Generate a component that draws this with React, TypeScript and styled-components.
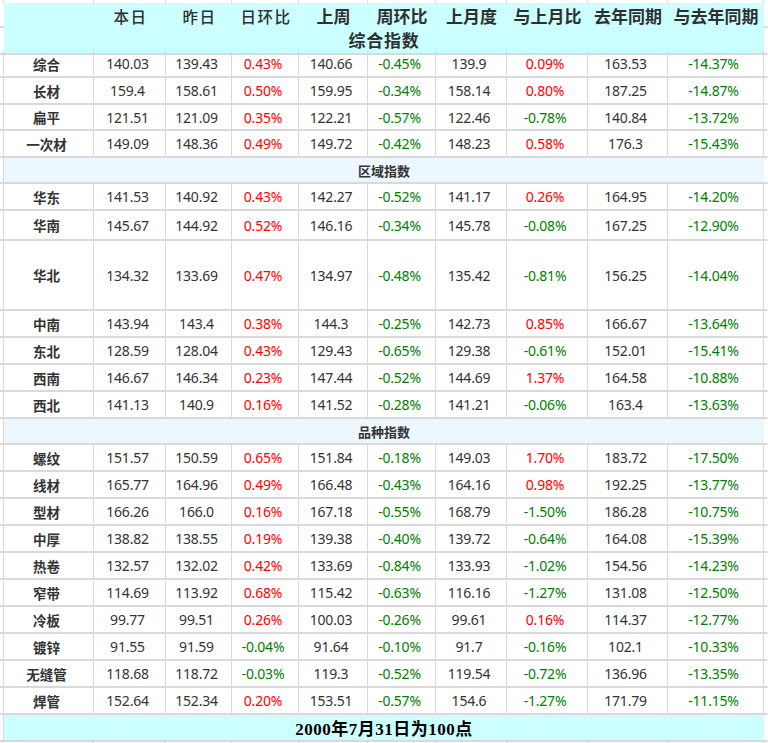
import React from "react";
import styled, { createGlobalStyle, css } from "styled-components";

const GlobalStyle = createGlobalStyle`
  html, body {
    margin: 0;
    padding: 0;
    background: #ffffff;
    overflow: hidden;
  }
  * { box-sizing: border-box; }
`;

const COLS = "4px 90px 72px 66px 67px 69px 68px 71px 81px 80px 96px 1fr";
const LINE = "#d9d9d9";
const CYAN = "#ccffff";
const BAND = "#ecf7ff";

const Sheet = styled.div`
  display: flex;
  flex-direction: column;
  width: 768px;
  height: 743px;
  overflow: hidden;
`;

const Row = styled.div<{ $h: number }>`
  display: grid;
  grid-template-columns: ${COLS};
  height: ${(p) => p.$h}px;
`;

const Stub = styled.div<{ $bottom?: boolean; $right?: boolean; $bg?: string }>`
  border-right: 1px solid ${(p) => (p.$right === false ? "transparent" : LINE)};
  border-bottom: ${(p) => (p.$bottom === false ? "0" : `2px solid ${LINE}`)};
  background: ${(p) => p.$bg ?? "transparent"};
`;

const HeadCell = styled.div<{ $light?: boolean }>`
  background: ${CYAN};
  display: flex;
  align-items: center;
  justify-content: center;
  font-family: "Noto Sans CJK SC", "Noto Sans", sans-serif;
  color: #2f2f2f;
  white-space: nowrap;
  ${(p) =>
    p.$light
      ? css`
          font-size: 15.5px;
          font-weight: 500;
          letter-spacing: 1.5px;
          padding-left: 1px;
        `
      : css`
          font-size: 17px;
          font-weight: 700;
        `}
`;

const HeadTitle = styled.div`
  grid-column: 2 / 12;
  background: ${CYAN};
  border-bottom: 2px solid ${LINE};
  display: flex;
  align-items: center;
  justify-content: center;
  font-family: "Noto Sans CJK SC", sans-serif;
  font-size: 17px;
  font-weight: 700;
  letter-spacing: 0.8px;
  color: #2f2f2f;
  padding-bottom: 1px;
`;

const Cell = styled.div<{ $tone?: "up" | "down" | "plain" }>`
  border-right: 1px solid ${LINE};
  border-bottom: 2px solid ${LINE};
  display: flex;
  align-items: center;
  justify-content: center;
  padding-right: 4px;
  font-family: "Noto Sans", "Noto Sans CJK SC", sans-serif;
  font-size: 14px;
  letter-spacing: -0.2px;
  white-space: nowrap;
  color: ${(p) =>
    p.$tone === "up" ? "#ff0000" : p.$tone === "down" ? "#008000" : "#333333"};
`;

const LabelCell = styled(Cell)`
  font-family: "Noto Sans CJK SC", sans-serif;
  font-size: 13.5px;
  font-weight: 700;
  letter-spacing: 0;
  color: #333333;
`;

const BandCell = styled.div<{ $bg: string; $footer?: boolean }>`
  grid-column: 2 / 12;
  background: ${(p) => p.$bg};
  border-bottom: 2px solid ${LINE};
  display: flex;
  align-items: center;
  justify-content: center;
  white-space: nowrap;
  color: ${(p) => (p.$footer ? "#000000" : "#333333")};
  font-weight: 700;
  ${(p) =>
    p.$footer
      ? css`
          font-family: "Liberation Serif", "Noto Sans CJK SC", serif;
          font-size: 17px;
          letter-spacing: 0.5px;
        `
      : css`
          font-family: "Noto Sans CJK SC", sans-serif;
          font-size: 13px;
        `}
`;

type DataRow = { name: string; h: number; v: string[] };

const heads = ["本日", "昨日", "日环比", "上周", "周环比", "上月度", "与上月比", "去年同期", "与去年同期"];

const group1: DataRow[] = [
  { name: "综合", h: 27, v: ["140.03", "139.43", "0.43%", "140.66", "-0.45%", "139.9", "0.09%", "163.53", "-14.37%"] },
  { name: "长材", h: 27, v: ["159.4", "158.61", "0.50%", "159.95", "-0.34%", "158.14", "0.80%", "187.25", "-14.87%"] },
  { name: "扁平", h: 26, v: ["121.51", "121.09", "0.35%", "122.21", "-0.57%", "122.46", "-0.78%", "140.84", "-13.72%"] },
  { name: "一次材", h: 27, v: ["149.09", "148.36", "0.49%", "149.72", "-0.42%", "148.23", "0.58%", "176.3", "-15.43%"] },
];

const group2: DataRow[] = [
  { name: "华东", h: 27, v: ["141.53", "140.92", "0.43%", "142.27", "-0.52%", "141.17", "0.26%", "164.95", "-14.20%"] },
  { name: "华南", h: 30, v: ["145.67", "144.92", "0.52%", "146.16", "-0.34%", "145.78", "-0.08%", "167.25", "-12.90%"] },
  { name: "华北", h: 70, v: ["134.32", "133.69", "0.47%", "134.97", "-0.48%", "135.42", "-0.81%", "156.25", "-14.04%"] },
  { name: "中南", h: 27, v: ["143.94", "143.4", "0.38%", "144.3", "-0.25%", "142.73", "0.85%", "166.67", "-13.64%"] },
  { name: "东北", h: 27, v: ["128.59", "128.04", "0.43%", "129.43", "-0.65%", "129.38", "-0.61%", "152.01", "-15.41%"] },
  { name: "西南", h: 27, v: ["146.67", "146.34", "0.23%", "147.44", "-0.52%", "144.69", "1.37%", "164.58", "-10.88%"] },
  { name: "西北", h: 27, v: ["141.13", "140.9", "0.16%", "141.52", "-0.28%", "141.21", "-0.06%", "163.4", "-13.63%"] },
];

const group3: DataRow[] = [
  { name: "螺纹", h: 27, v: ["151.57", "150.59", "0.65%", "151.84", "-0.18%", "149.03", "1.70%", "183.72", "-17.50%"] },
  { name: "线材", h: 27, v: ["165.77", "164.96", "0.49%", "166.48", "-0.43%", "164.16", "0.98%", "192.25", "-13.77%"] },
  { name: "型材", h: 27, v: ["166.26", "166.0", "0.16%", "167.18", "-0.55%", "168.79", "-1.50%", "186.28", "-10.75%"] },
  { name: "中厚", h: 27, v: ["138.82", "138.55", "0.19%", "139.38", "-0.40%", "139.72", "-0.64%", "164.08", "-15.39%"] },
  { name: "热卷", h: 27, v: ["132.57", "132.02", "0.42%", "133.69", "-0.84%", "133.93", "-1.02%", "154.56", "-14.23%"] },
  { name: "窄带", h: 27, v: ["114.69", "113.92", "0.68%", "115.42", "-0.63%", "116.16", "-1.27%", "131.08", "-12.50%"] },
  { name: "冷板", h: 27, v: ["99.77", "99.51", "0.26%", "100.03", "-0.26%", "99.61", "0.16%", "114.37", "-12.77%"] },
  { name: "镀锌", h: 27, v: ["91.55", "91.59", "-0.04%", "91.64", "-0.10%", "91.7", "-0.16%", "102.1", "-10.33%"] },
  { name: "无缝管", h: 27, v: ["118.68", "118.72", "-0.03%", "119.3", "-0.52%", "119.54", "-0.72%", "136.96", "-13.35%"] },
  { name: "焊管", h: 27, v: ["152.64", "152.34", "0.20%", "153.51", "-0.57%", "154.6", "-1.27%", "171.79", "-11.15%"] },
];

const toneOf = (s: string): "up" | "down" | "plain" =>
  s.endsWith("%") ? (s.startsWith("-") ? "down" : "up") : "plain";

function EdgeRow({ h }: { h: number }) {
  return (
    <Row $h={h}>
      {Array.from({ length: 12 }).map((_, i) => (
        <Stub key={i} $bottom={false} $right={i < 11} />
      ))}
    </Row>
  );
}

function Data({ row }: { row: DataRow }) {
  return (
    <Row $h={row.h}>
      <Stub />
      <LabelCell>{row.name}</LabelCell>
      {row.v.map((s, i) => (
        <Cell key={i} $tone={toneOf(s)}>
          {s}
        </Cell>
      ))}
      <Stub $right={false} />
    </Row>
  );
}

function Band({ text, bg, footer }: { text: string; bg: string; footer?: boolean }) {
  return (
    <Row $h={26}>
      <Stub />
      <BandCell $bg={bg} $footer={footer}>
        {text}
      </BandCell>
      <Stub $right={false} />
    </Row>
  );
}

export default function App() {
  return (
    <>
      <GlobalStyle />
      <Sheet>
        <EdgeRow h={3} />
        <Row $h={24}>
          <Stub $right={false} />
          <HeadCell />
          {heads.map((h, i) => (
            <HeadCell key={h} $light={i < 3}>
              {h}
            </HeadCell>
          ))}
          <Stub $right={false} />
        </Row>
        <Row $h={24}>
          <Stub $right={false} />
          <HeadTitle>综合指数</HeadTitle>
          <Stub $right={false} />
        </Row>
        {group1.map((r) => (
          <Data key={r.name} row={r} />
        ))}
        <Band text="区域指数" bg={BAND} />
        {group2.map((r) => (
          <Data key={r.name} row={r} />
        ))}
        <Band text="品种指数" bg={BAND} />
        {group3.map((r) => (
          <Data key={r.name} row={r} />
        ))}
        <Band text="2000年7月31日为100点" bg={CYAN} footer />
        <EdgeRow h={2} />
      </Sheet>
    </>
  );
}
